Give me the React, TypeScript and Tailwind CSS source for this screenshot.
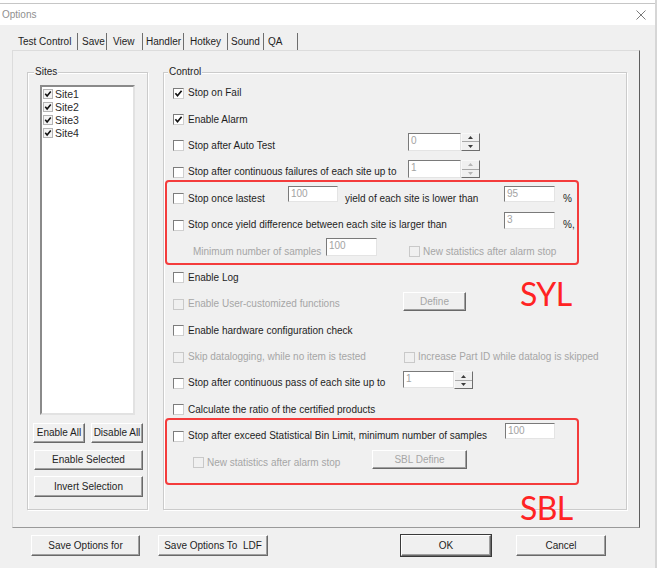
import React from "react";

type CheckProps = { checked?: boolean; disabled?: boolean };

// classic sunken 3D checkbox
const CheckBox = ({ checked, disabled }: CheckProps) => (
  <span
    className={
      disabled
        ? "w-[11px] h-[11px] shrink-0 border border-[#c9c9c9] bg-[#f0f0f0]"
        : "w-[11px] h-[11px] shrink-0 border border-t-[#7c7c7c] border-l-[#7c7c7c] border-r-[#cfcfcf] border-b-[#cfcfcf] bg-white flex items-center justify-center"
    }
  >
    {checked && (
      <svg width="9" height="9" viewBox="0 0 9 9">
        <path d="M1.4 4.3 L3.5 6.7 L7.6 1.8" fill="none" stroke="#111" strokeWidth="1.7" />
      </svg>
    )}
  </span>
);

const Field = ({ value, className }: { value: string; className: string }) => (
  <div
    className={`${className} self-start shrink-0 bg-white border border-t-[#7a7a7a] border-l-[#7a7a7a] border-r-[#e4e4e4] border-b-[#e4e4e4] pl-[2px] text-[#a3a3a3] leading-[14px]`}
  >
    {value}
  </div>
);

const Spin = ({ disabled }: { disabled?: boolean }) => {
  const c = disabled ? "#b5b5b5" : "#3c3c3c";
  return (
    <div className="self-start w-[19px] h-[18px] shrink-0 flex flex-col border border-t-[#f8f8f8] border-l-[#f8f8f8] border-r-[#6d6d6d] border-b-[#6d6d6d] bg-[#f0f0f0]">
      <div className="flex-1 flex items-center justify-center border-b border-[#a8a8a8]">
        <svg width="5" height="3" viewBox="0 0 5 3">
          <path d="M0 3 L2.5 0 L5 3Z" fill={c} />
        </svg>
      </div>
      <div className="flex-1 flex items-center justify-center">
        <svg width="5" height="3" viewBox="0 0 5 3">
          <path d="M0 0 L2.5 3 L5 0Z" fill={c} />
        </svg>
      </div>
    </div>
  );
};

type BtnProps = {
  children: React.ReactNode;
  className: string;
  disabled?: boolean;
  isDefault?: boolean;
};

const Btn = ({ children, className, disabled, isDefault }: BtnProps) => (
  <button
    className={`${className} shrink-0 flex items-center justify-center whitespace-pre bg-[#f0f0f0] border border-t-white border-l-white border-r-[#696969] border-b-[#696969] shadow-[inset_-1px_-1px_0_#a0a0a0] ${
      disabled ? "text-[#a6a6a6]" : "text-[#1e1e1e]"
    } ${isDefault ? "ring-1 ring-[#3a3a3a]" : ""}`}
  >
    {children}
  </button>
);

const Row = ({ children }: { children: React.ReactNode }) => (
  <div className="flex items-center h-[26.4px] pl-[9px] whitespace-nowrap">{children}</div>
);

const Label = ({ text, disabled }: { text: string; disabled?: boolean }) => (
  <span className={disabled ? "ml-[4px] text-[#a6a6a6]" : "ml-[4px]"}>{text}</span>
);

const tabs = [
  { label: "Test Control", cls: "w-[63px] pl-[4px]" },
  { label: "Save", cls: "w-[28px] pl-[4px]" },
  { label: "View", cls: "w-[35px] pl-[6px]" },
  { label: "Handler", cls: "w-[40px] pl-[3px]" },
  { label: "Hotkey", cls: "w-[43px] pl-[6px]" },
  { label: "Sound", cls: "w-[35px] pl-[3px]" },
  { label: "QA", cls: "w-[33px] pl-[4px]" },
];

const sites = ["Site1", "Site2", "Site3", "Site4"];

export default function App() {
  return (
    <div className="relative w-[657px] h-[568px] overflow-hidden bg-[#f0f0f0] border-r-2 border-[#d6d6d6] font-['Liberation_Sans',Arial,sans-serif] text-[10px] leading-[12px] text-[#1e1e1e]">
      {/* title bar */}
      <div className="h-[25px] bg-white pt-[3px]">
        <div className="h-full border-t border-[#c6c6c6] flex items-center justify-between pl-[2px] pr-[9px]">
          <span className="text-[#8f8f8f]">Options</span>
          <svg width="10" height="10" viewBox="0 0 10 10">
            <path d="M0.5 0.5 L9.5 9.5 M9.5 0.5 L0.5 9.5" stroke="#7a7a7a" strokeWidth="1" />
          </svg>
        </div>
      </div>

      {/* tabs */}
      <div className="h-[25px] flex items-end pl-[14px]">
        <div className="flex h-[17px] items-center">
          {tabs.map((t) => (
            <React.Fragment key={t.label}>
              <div className={`${t.cls} whitespace-nowrap`}>{t.label}</div>
              <span className="w-px h-[17px] bg-[#6e6e6e]" />
            </React.Fragment>
          ))}
        </div>
      </div>

      {/* tab panel */}
      <div className="ml-[12px] w-[628px] h-[478px] border border-t-[#dcdcdc] border-l-[#dcdcdc] border-r-[#5e5e5e] border-b-[#9a9a9a] pt-[21px] pl-[14px] flex gap-[15px]">
        {/* Sites */}
        <div className="relative w-[121px] h-[438px] border border-[#cbcbcb] shadow-[inset_1px_1px_0_#fff,1px_1px_0_#fff]">
          <span className="absolute -top-[7px] left-[6px] px-[1px] bg-[#f0f0f0]">Sites</span>
          <div className="ml-[12px] mt-[12px] w-[95px] h-[330px] bg-white border-2 border-t-[#8a8a8a] border-l-[#8a8a8a] border-r-[#e2e2e2] border-b-[#e2e2e2]">
            {sites.map((s) => (
              <div key={s} className="flex items-center h-[13px] pl-[1px] text-[10.5px]">
                <span className="w-[10px] h-[10px] border border-[#b4b4b4] bg-[#f4f4f4] flex items-center justify-center">
                  <svg width="8" height="8" viewBox="0 0 9 9">
                    <path d="M1.4 4.3 L3.5 6.7 L7.6 1.8" fill="none" stroke="#111" strokeWidth="1.8" />
                  </svg>
                </span>
                <span className="ml-[2px] text-[#2a2a2a]">{s}</span>
              </div>
            ))}
          </div>
          <div className="mt-[8px] pl-[5px]">
            <div className="flex gap-[6px]">
              <Btn className="w-[52px] h-[20px]">Enable All</Btn>
              <Btn className="w-[52px] h-[20px]">Disable All</Btn>
            </div>
            <Btn className="mt-[7px] ml-[1px] w-[109px] h-[20px]">Enable Selected</Btn>
            <Btn className="mt-[6px] ml-[1px] w-[109px] h-[21px]">Invert Selection</Btn>
          </div>
        </div>

        {/* Control */}
        <div className="relative w-[464px] h-[438px] border border-[#cbcbcb] shadow-[inset_1px_1px_0_#fff,1px_1px_0_#fff] pt-[7px]">
          <span className="absolute -top-[7px] left-[4px] px-[1px] bg-[#f0f0f0]">Control</span>

          <Row>
            <CheckBox checked />
            <Label text="Stop on Fail" />
          </Row>
          <Row>
            <CheckBox checked />
            <Label text="Enable Alarm" />
          </Row>
          <Row>
            <div className="w-[235px] flex items-center shrink-0">
              <CheckBox />
              <Label text="Stop after Auto Test" />
            </div>
            <Field value="0" className="w-[53px] h-[18px]" />
            <Spin />
          </Row>
          <Row>
            <div className="w-[235px] flex items-center shrink-0">
              <CheckBox />
              <Label text="Stop after continuous failures of each site up to" />
            </div>
            <Field value="1" className="w-[53px] h-[18px] mt-[1px]" />
            <div className="mt-[1px] self-start">
              <Spin disabled />
            </div>
          </Row>
          <Row>
            <div className="w-[115px] flex items-center shrink-0">
              <CheckBox />
              <Label text="Stop once lastest" />
            </div>
            <Field value="100" className="w-[50px] h-[16px]" />
            <span className="ml-[7px] w-[159px] shrink-0">yield of each site is lower than</span>
            <Field value="95" className="w-[51px] h-[16px]" />
            <span className="ml-[8px]">%</span>
          </Row>
          <Row>
            <div className="w-[331px] flex items-center shrink-0">
              <CheckBox />
              <Label text="Stop once yield difference between each site is larger than" />
            </div>
            <Field value="3" className="w-[51px] h-[17px]" />
            <span className="ml-[8px]">%,</span>
          </Row>
          <Row>
            <span className="ml-[20px] w-[133px] shrink-0 text-[#a6a6a6]">Minimum number of samples</span>
            <Field value="100" className="w-[51px] h-[18px]" />
            <span className="ml-[32px] flex items-center">
              <CheckBox disabled />
              <span className="ml-[3px] text-[#a6a6a6]">New statistics after alarm stop</span>
            </span>
          </Row>
          <Row>
            <CheckBox />
            <Label text="Enable Log" />
          </Row>
          <Row>
            <div className="w-[230px] flex items-center shrink-0">
              <CheckBox disabled />
              <Label text="Enable User-customized functions" disabled />
            </div>
            <div className="self-start mt-[1px]">
              <Btn className="w-[63px] h-[19px]" disabled>
                Define
              </Btn>
            </div>
          </Row>
          <Row>
            <CheckBox />
            <Label text="Enable hardware configuration check" />
          </Row>
          <Row>
            <div className="w-[231px] flex items-center shrink-0">
              <CheckBox disabled />
              <Label text="Skip datalogging, while no item is tested" disabled />
            </div>
            <CheckBox disabled />
            <span className="ml-[3px] text-[#a6a6a6]">Increase Part ID while datalog is skipped</span>
          </Row>
          <Row>
            <div className="w-[230px] flex items-center shrink-0">
              <CheckBox />
              <Label text="Stop after continuous pass of each site up to" />
            </div>
            <Field value="1" className="w-[51px] h-[17px] mt-[1px]" />
            <div className="mt-[1px] self-start">
              <Spin />
            </div>
          </Row>
          <Row>
            <CheckBox />
            <Label text="Calculate the ratio of the certified products" />
          </Row>
          <Row>
            <div className="w-[332px] flex items-center shrink-0">
              <CheckBox />
              <Label text="Stop after exceed Statistical Bin Limit, minimum number of samples" />
            </div>
            <Field value="100" className="w-[50px] h-[16px]" />
          </Row>
          <Row>
            <div className="ml-[20px] w-[179px] flex items-center shrink-0">
              <CheckBox disabled />
              <span className="ml-[3px] text-[#a6a6a6]">New statistics after alarm stop</span>
            </div>
            <div className="self-start mt-[1px]">
              <Btn className="w-[95px] h-[19px]" disabled>
                SBL Define
              </Btn>
            </div>
          </Row>
        </div>
      </div>

      {/* dialog buttons */}
      <div className="flex mt-[7px] pl-[31px]">
        <Btn className="w-[109px] h-[21px]">Save Options for</Btn>
        <Btn className="ml-[18px] w-[110px] h-[21px]">Save Options To  LDF</Btn>
        <Btn className="ml-[133px] w-[90px] h-[21px]" isDefault>
          OK
        </Btn>
        <Btn className="ml-[25px] w-[90px] h-[21px]">Cancel</Btn>
      </div>

      {/* red annotations drawn over the dialog */}
      <div className="absolute left-[165px] top-[180px] w-[414px] h-[85px] border-2 border-[#f43c3c] rounded-[4px]" />
      <div className="absolute left-[165px] top-[418px] w-[414px] h-[67px] border-2 border-[#f43c3c] rounded-[4px]" />
      <span className="absolute left-[520px] top-[278px] font-['Lato',sans-serif] text-[32px] tracking-[-0.6px] leading-none text-[#ff2323]">
        SYL
      </span>
      <span className="absolute left-[520px] top-[492px] font-['Lato',sans-serif] text-[32px] tracking-[-0.6px] leading-none text-[#ff2323]">
        SBL
      </span>
    </div>
  );
}
